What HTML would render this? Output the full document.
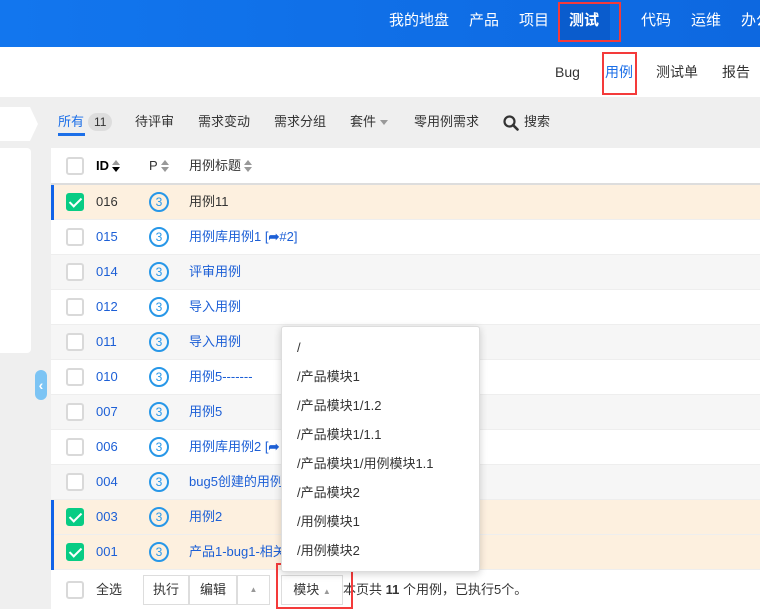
<!DOCTYPE html>
<html><head><meta charset="utf-8"><style>
*{box-sizing:border-box;margin:0;padding:0}
body{width:760px;height:609px;overflow:hidden;background:#efefef;font-family:"Liberation Sans","Noto Sans CJK SC",sans-serif;font-size:13px;color:#333;position:relative;white-space:nowrap}
.top{position:absolute;left:0;top:0;width:760px;height:47px;background:linear-gradient(90deg,#1276ee,#0d68e0)}
.top span{position:absolute;top:0;line-height:42px;color:#fff;font-size:15px}
.sub{position:absolute;left:0;top:47px;width:760px;height:50px;background:#fff}
.sub span{position:absolute;top:0;line-height:50px;font-size:14px;color:#333}
.red{position:absolute;border:2px solid #f43a3a}
.tabs span{position:absolute;top:108px;line-height:28px;font-size:13px;color:#333}
.tbl{position:absolute;left:51px;top:148px;width:709px;height:461px;background:#fff}
.row{position:absolute;left:0;width:709px;height:35px;border-bottom:1px solid #eee;line-height:34px}
.row.g{background:#f6f6f6}.row.c{background:#fdf0df}
.row.c:before{content:"";position:absolute;left:0;top:0;width:3px;height:35px;background:#1263e8}
.cb{position:absolute;left:15px;top:8px;width:18px;height:18px;border:2px solid #d9d9d9;border-radius:3px;background:#fff}
.row.c .cb{background:#08cc84;border-color:#08cc84}
.row.c .cb:after{content:"";position:absolute;left:4px;top:0px;width:5px;height:10px;border:solid #fff;border-width:0 2px 2px 0;transform:rotate(45deg)}
.id{position:absolute;left:45px;top:0;color:#1c5fd6}
.p{position:absolute;left:98px;top:7px;width:20px;height:20px;border:2px solid #2797e8;border-radius:50%;color:#2797e8;font-size:12px;text-align:center;line-height:16px}
.t{position:absolute;left:138px;top:0;color:#1c5fd6;font-size:13px}
.dd{position:absolute;left:281px;top:326px;width:199px;height:246px;background:#fff;border:1px solid #ddd;border-radius:3px;box-shadow:0 2px 8px rgba(0,0,0,.18)}
.dd div{position:absolute;left:15px;font-size:13px;color:#333;line-height:18px}
.btn{position:absolute;top:575px;height:30px;border:1px solid #ddd;background:#fff;font-size:13px;line-height:28px;text-align:center}
.s{display:inline-block;vertical-align:middle;margin-left:3px;width:0;height:13px;position:relative}
.s:before,.s:after{content:"";position:absolute;left:0;border-left:4px solid transparent;border-right:4px solid transparent}
.s:before{top:0;border-bottom:5px solid #999}
.s:after{top:7px;border-top:5px solid #999}
.s.k:after{border-top-color:#000}
</style></head><body>
<div class="top">
<span style="left:389px">我的地盘</span><span style="left:469px">产品</span><span style="left:519px">项目</span>
<div style="position:absolute;left:560px;top:0;width:50px;height:42px;background:#0a5ccd"></div>
<span style="left:569px;font-weight:bold">测试</span>
<span style="left:641px">代码</span><span style="left:691px">运维</span><span style="left:741px">办公</span>
</div>
<div class="red" style="left:558px;top:2px;width:63px;height:40px"></div>
<div class="sub">
<span style="left:-6px;color:#1c6fe8">〉</span>
<span style="left:555px">Bug</span><span style="left:605px;color:#1c6fe8">用例</span><span style="left:656px">测试单</span><span style="left:722px">报告</span>
</div>
<div class="red" style="left:602px;top:52px;width:35px;height:43px"></div>
<div style="position:absolute;left:0;top:107px;width:30px;height:34px;background:#fff"></div>
<div style="position:absolute;left:30px;top:107px;width:0;height:0;border-top:17px solid transparent;border-bottom:17px solid transparent;border-left:8px solid #fff"></div>
<div class="tabs">
<span style="left:58px;color:#1c6fe8">所有</span>
<span style="left:88px;top:113px;line-height:18px;background:#ddd;border-radius:9px;padding:0 6px;font-size:12px">11</span>
<div style="position:absolute;left:58px;top:133px;width:27px;height:3px;background:#1c6fe8"></div>
<span style="left:135px">待评审</span><span style="left:198px">需求变动</span><span style="left:274px">需求分组</span><span style="left:350px">套件 <span style="position:relative;display:inline-block;top:0;border-left:4px solid transparent;border-right:4px solid transparent;border-top:5px solid #999;vertical-align:middle;line-height:0"></span></span><span style="left:414px">零用例需求</span>
<svg style="position:absolute;left:503px;top:115px" width="16" height="16" viewBox="0 0 16 16"><circle cx="6.5" cy="6.5" r="5" fill="none" stroke="#333" stroke-width="2.2"/><line x1="10" y1="10" x2="14.5" y2="14.5" stroke="#333" stroke-width="2.6" stroke-linecap="round"/></svg>
<span style="left:524px">搜索</span>
</div>
<div style="position:absolute;left:0;top:148px;width:31px;height:205px;background:#fff;border-radius:0 4px 4px 0"></div>
<div style="position:absolute;left:35px;top:370px;width:12px;height:30px;background:#7cc4f4;border-radius:6px;color:#fff;font-size:14px;font-weight:bold;line-height:30px;text-align:center">‹</div>
<div class="tbl">
<div style="position:absolute;left:0;top:0;width:709px;height:37px;border-bottom:2px solid #ddd;line-height:36px">
<div class="cb" style="top:9px"></div>
<span style="position:absolute;left:45px;font-weight:bold;color:#000">ID<span class="s k"></span></span>
<span style="position:absolute;left:98px">P<span class="s"></span></span>
<span style="position:absolute;left:138px">用例标题<span class="s"></span></span>
</div>
<div class="row c" style="top:37px"><div class="cb"></div><span class="id" style="color:#333">016</span><div class="p">3</div><span class="t" style="color:#333">用例11</span></div>
<div class="row" style="top:72px"><div class="cb"></div><span class="id">015</span><div class="p">3</div><span class="t">用例库用例1 [<b>➦</b>#2]</span></div>
<div class="row g" style="top:107px"><div class="cb"></div><span class="id">014</span><div class="p">3</div><span class="t">评审用例</span></div>
<div class="row" style="top:142px"><div class="cb"></div><span class="id">012</span><div class="p">3</div><span class="t">导入用例</span></div>
<div class="row g" style="top:177px"><div class="cb"></div><span class="id">011</span><div class="p">3</div><span class="t">导入用例</span></div>
<div class="row" style="top:212px"><div class="cb"></div><span class="id">010</span><div class="p">3</div><span class="t">用例5-------</span></div>
<div class="row g" style="top:247px"><div class="cb"></div><span class="id">007</span><div class="p">3</div><span class="t">用例5</span></div>
<div class="row" style="top:282px"><div class="cb"></div><span class="id">006</span><div class="p">3</div><span class="t">用例库用例2 [<b>➦</b></span></div>
<div class="row g" style="top:317px"><div class="cb"></div><span class="id">004</span><div class="p">3</div><span class="t">bug5创建的用例</span></div>
<div class="row c" style="top:352px"><div class="cb"></div><span class="id">003</span><div class="p">3</div><span class="t">用例2</span></div>
<div class="row c" style="top:387px"><div class="cb"></div><span class="id">001</span><div class="p">3</div><span class="t">产品1-bug1-相关</span></div>
<div class="cb" style="top:433px"></div>
<span style="position:absolute;left:45px;top:432px;line-height:20px">全选</span>
</div>
<div class="btn" style="left:143px;width:46px">执行</div>
<div class="btn" style="left:189px;width:48px">编辑</div>
<div class="btn" style="left:237px;width:33px;color:#999;font-size:8px">▲</div>
<div class="btn" style="left:281px;width:62px">模块 <span style="color:#999;font-size:8px">▲</span></div>
<span style="position:absolute;left:343px;top:580px;line-height:20px">本页共 <b>11</b> 个用例，已执行5个。</span>
<div class="red" style="left:276px;top:563px;width:77px;height:46px"></div>
<div class="dd">
<div style="top:12px">/</div><div style="top:41px">/产品模块1</div><div style="top:70px">/产品模块1/1.2</div><div style="top:99px">/产品模块1/1.1</div><div style="top:128px">/产品模块1/用例模块1.1</div><div style="top:157px">/产品模块2</div><div style="top:186px">/用例模块1</div><div style="top:215px">/用例模块2</div>
</div>
</body></html>
